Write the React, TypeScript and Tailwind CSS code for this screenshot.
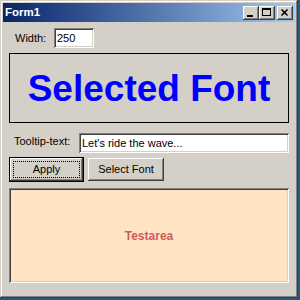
import React from "react";

const raised =
  "shadow-[inset_-1px_-1px_#404040,inset_1px_1px_#ffffff,inset_-2px_-2px_#808080,inset_2px_2px_#d4d0c8]";
const sunken =
  "shadow-[inset_1px_1px_#808080,inset_-1px_-1px_#ffffff,inset_2px_2px_#404040,inset_-2px_-2px_#d4d0c8]";

const font = { fontFamily: '"Liberation Sans", Arial, sans-serif' };

const CaptionButton: React.FC<{ kind: "min" | "max" | "close" }> = ({ kind }) => (
  <div className={`w-[16px] h-[14px] bg-[#d4d0c8] ${raised} flex items-center justify-center`}>
    <svg width="16" height="14" viewBox="0 0 16 14" shapeRendering="crispEdges">
      {kind === "min" && <rect x="4" y="9" width="6" height="2" fill="#000" />}
      {kind === "max" && (
        <g fill="none" stroke="#000">
          <rect x="3.5" y="2.5" width="8" height="7" />
          <line x1="3" y1="3.5" x2="12" y2="3.5" />
        </g>
      )}
      {kind === "close" && (
        <g stroke="#000" strokeWidth="1.6" shapeRendering="auto">
          <line x1="4.5" y1="3.5" x2="10.5" y2="9.5" />
          <line x1="10.5" y1="3.5" x2="4.5" y2="9.5" />
        </g>
      )}
    </svg>
  </div>
);

export default function App() {
  return (
    <div className="w-[300px] h-[300px] bg-[#245a78]" style={font}>
      {/* window */}
      <div
        className={`w-[298px] h-[298px] bg-[#d4d0c8] p-[3px] flex flex-col shadow-[inset_-1px_-1px_#404040,inset_1px_1px_#d4d0c8,inset_-2px_-2px_#808080,inset_2px_2px_#ffffff]`}
      >
        {/* title bar */}
        <div className="h-[19px] flex items-center justify-between pl-[2px] pr-[2px] bg-linear-to-r from-[#0a246a] to-[#a6caf0]">
          <span className="text-white font-bold text-[11.5px] leading-none">Form1</span>
          <div className="flex items-center">
            <CaptionButton kind="min" />
            <CaptionButton kind="max" />
            <div className="w-[2px]" />
            <CaptionButton kind="close" />
          </div>
        </div>

        {/* client area */}
        <div className="flex flex-col px-[6px] pt-[6px] text-[11px] text-black">
          <div className="flex items-center h-[20px]">
            <span className="ml-[6px] w-[39px]">Width:</span>
            <div className={`w-[40px] h-[20px] bg-white ${sunken} flex items-center px-[3px]`}>250</div>
          </div>

          <div className="mt-[5px] h-[70px] border border-black flex items-center justify-center">
            <span className="text-[#0000ff] font-bold text-[37px] leading-none">Selected Font</span>
          </div>

          <div className="mt-[10px] flex items-center h-[20px]">
            <span className="ml-[5px] w-[65px] -mt-[3px]">Tooltip-text:</span>
            <div className={`flex-1 h-[20px] bg-white ${sunken} flex items-center px-[3px]`}>
              Let's ride the wave...
            </div>
          </div>

          <div className="mt-[4px] flex items-start gap-[4px]">
            <div className="w-[75px] h-[25px] border border-black">
              <div className={`w-full h-full bg-[#d4d0c8] ${raised} p-[3px]`}>
                <div className="w-full h-full border border-dotted border-black flex items-center justify-center">
                  Apply
                </div>
              </div>
            </div>
            <div className={`w-[76px] h-[23px] mt-[1px] bg-[#d4d0c8] ${raised} flex items-center justify-center`}>
              Select Font
            </div>
          </div>

          <div className={`mt-[6px] h-[95px] bg-[#ffe4c4] ${sunken} flex items-center justify-center`}>
            <span className="text-[#cd5c5c] font-bold text-[12px]">Testarea</span>
          </div>
        </div>
      </div>
    </div>
  );
}
